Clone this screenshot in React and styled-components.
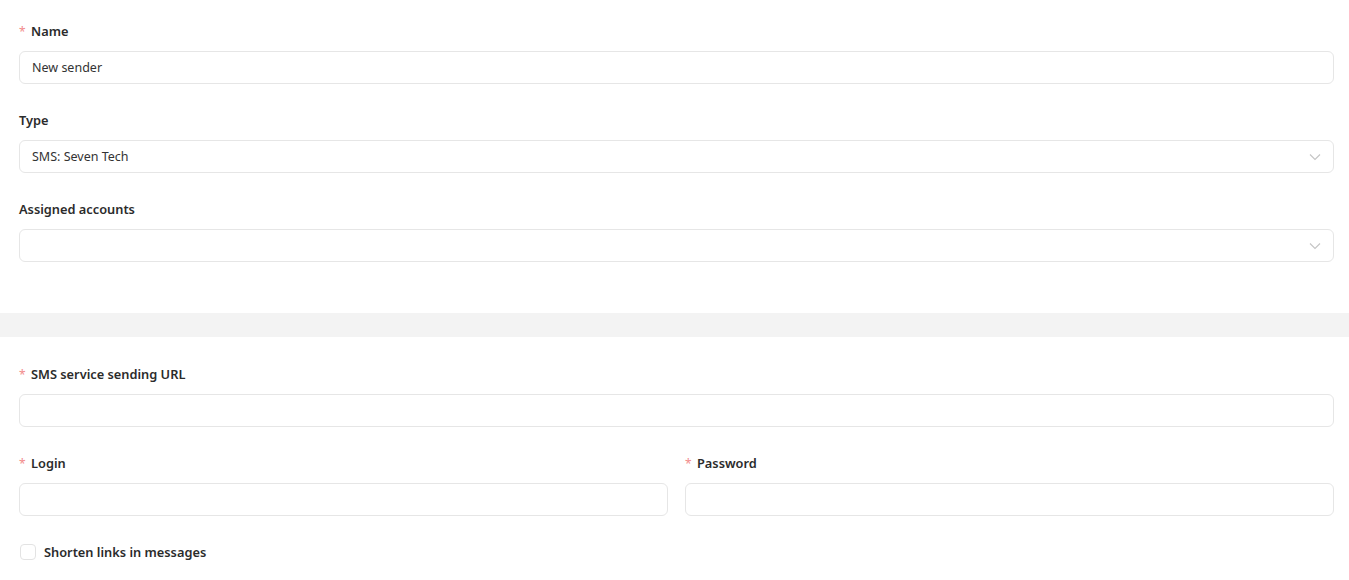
import React from 'react';
import styled, { createGlobalStyle } from 'styled-components';

const GlobalStyle = createGlobalStyle`
  body {
    margin: 0;
    background: #fff;
    font-family: 'Noto Sans', 'Open Sans', sans-serif;
    color: #2b2b2b;
  }
`;

const Page = styled.div`
  display: flex;
  flex-direction: column;
`;

const Section = styled.div`
  display: flex;
  flex-direction: column;
  gap: 26px;
  padding: ${p => p.$pad};
`;

const Band = styled.div`
  height: 24px;
  background: #f3f3f3;
`;

const Row = styled.div`
  display: grid;
  grid-template-columns: 1fr 1fr;
  gap: 17px;
`;

const Field = styled.div`
  display: flex;
  flex-direction: column;
  gap: 9px;
`;

const Label = styled.label`
  font-size: 12.8px;
  font-weight: 600;
  line-height: 21px;
  color: #2b2b2b;
  display: flex;
  align-items: center;
`;

const Star = styled.span`
  color: #f28b8b;
  font-weight: 400;
  font-size: 12px;
  width: 12px;
`;

const Box = styled.div`
  height: 33px;
  box-sizing: border-box;
  border: 1px solid #e6e6e6;
  border-radius: 6px;
  display: flex;
  align-items: center;
  justify-content: space-between;
  padding: 0 12px 0 12px;
  font-size: 12.5px;
  color: #333;
`;

const Chevron = () => (
  <svg width="12" height="8" viewBox="0 0 12 8" fill="none">
    <path d="M1 1.5l5 5 5-5" stroke="#c4c4c4" strokeWidth="1.1" />
  </svg>
);

const CheckRow = styled.label`
  display: flex;
  align-items: center;
  gap: 8px;
  font-size: 12.8px;
  font-weight: 600;
  line-height: 20px;
`;

const Check = styled.span`
  width: 16px;
  height: 16px;
  box-sizing: border-box;
  border: 1px solid #e3e3e3;
  border-radius: 4px;
  margin-left: 1px;
`;

const Input = ({ label, required, value, select }) => (
  <Field>
    <Label>
      {required && <Star>*</Star>}
      {label}
    </Label>
    <Box>
      <span>{value}</span>
      {select && <Chevron />}
    </Box>
  </Field>
);

export default function App() {
  return (
    <Page>
      <GlobalStyle />
      <Section $pad="21px 15px 51px 19px">
        <Input label="Name" required value="New sender" />
        <Input label="Type" value="SMS: Seven Tech" select />
        <Input label="Assigned accounts" select />
      </Section>
      <Band />
      <Section $pad="27px 15px 20px 19px">
        <Input label="SMS service sending URL" required />
        <Row>
          <Input label="Login" required />
          <Input label="Password" required />
        </Row>
        <CheckRow>
          <Check />
          Shorten links in messages
        </CheckRow>
      </Section>
    </Page>
  );
}
